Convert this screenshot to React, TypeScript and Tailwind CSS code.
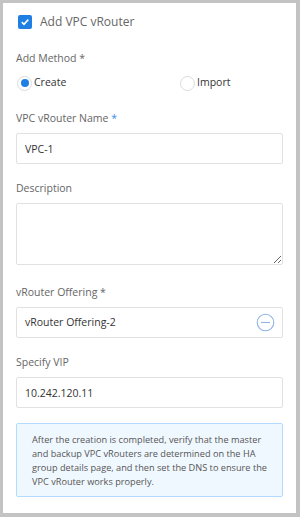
import { useState } from 'react';

function Label({ text, star, starBlue }: { text: string; star?: boolean; starBlue?: boolean }) {
    return (
        <div className="text-[10.5px] leading-4 text-[#666] mb-[7px]">
            {text}
            {star && <span className={starBlue ? 'text-[#3c8ce7]' : ''}> *</span>}
        </div>
    );
}

function Radio({ checked, label, onClick }: { checked: boolean; label: string; onClick: () => void }) {
    return (
        <button type="button" onClick={onClick} className="flex items-center gap-[2px] text-[10.5px] text-[#333]">
            <span className="w-[15px] h-[15px] rounded-full border border-[#dcdcdc] bg-white flex items-center justify-center">
                {checked && <span className="w-[8px] h-[8px] rounded-full bg-[#1f7fe3]" />}
            </span>
            {label}
        </button>
    );
}

export default function App() {
    const [method, setMethod] = useState<'create' | 'import'>('create');
    const [enabled, setEnabled] = useState(true);

    return (
        <div className="w-[300px] h-[517px] bg-[#c3c3c3] pt-[3px] pl-[3px] pr-[4px] pb-[4px]" style={{ fontFamily: '"Open Sans", "Noto Sans", sans-serif' }}>
            <div className="bg-white h-full px-[13px] pt-[11px]">

                {/* checkbox */}
                <button type="button" onClick={() => setEnabled(!enabled)} className="flex items-center gap-[8px] h-[15px] ml-[2px]">
                    <span className={`w-[14px] h-[14px] rounded-[2px] flex items-center justify-center ${enabled ? 'bg-[#1f7fe3]' : 'border border-[#ccc]'}`}>
                        {enabled && (
                            <svg width="10" height="10" viewBox="0 0 10 10">
                                <path d="M1.8 5.2 L4 7.3 L8.3 2.6" fill="none" stroke="white" strokeWidth="1.6" />
                            </svg>
                        )}
                    </span>
                    <span className="text-[12px] text-[#666]">Add VPC vRouter</span>
                </button>

                <div className="mt-[21px]">
                    <Label text="Add Method" star />
                    <div className="flex items-center h-[20px] mt-[1px]">
                        <div className="w-[164px] pl-[1px]">
                            <Radio checked={method === 'create'} label="Create" onClick={() => setMethod('create')} />
                        </div>
                        <Radio checked={method === 'import'} label="Import" onClick={() => setMethod('import')} />
                    </div>
                </div>

                <div className="mt-[17px]">
                    <Label text="VPC vRouter Name" star starBlue />
                    <input
                        className="w-full h-[31px] border border-[#e1e1e1] rounded-[2px] px-[8px] text-[10.5px] text-[#333] outline-none block"
                        defaultValue="VPC-1"
                    />
                </div>

                <div className="mt-[16px]">
                    <Label text="Description" />
                    <textarea className="w-full h-[62px] border border-[#e1e1e1] rounded-[2px] px-[8px] py-[6px] text-[10.5px] outline-none block" />
                </div>

                <div className="mt-[19px]">
                    <Label text="vRouter Offering" star />
                    <div className="w-full h-[31px] border border-[#e1e1e1] rounded-[2px] pl-[8px] pr-[7px] flex items-center justify-between">
                        <span className="text-[10.5px] text-[#333]">vRouter Offering-2</span>
                        <svg width="19" height="19" viewBox="0 0 19 19">
                            <circle cx="9.5" cy="9.5" r="8.3" fill="none" stroke="#8fb5e6" strokeWidth="1.1" />
                            <path d="M5 9.5 H14" stroke="#8fb5e6" strokeWidth="1.1" />
                        </svg>
                    </div>
                </div>

                <div className="mt-[16px]">
                    <Label text="Specify VIP" />
                    <input
                        className="w-full h-[31px] border border-[#e1e1e1] rounded-[2px] px-[8px] text-[10.5px] text-[#333] outline-none block"
                        defaultValue="10.242.120.11"
                    />
                </div>

                <div className="mt-[15px] h-[74px] bg-[#f0f8ff] border border-[#b5daff] rounded-[2px] pl-[15px] pr-[10px] pt-[9px] text-[9.2px] leading-[14px] text-[#555]">
                    After the creation is completed, verify that the master and backup VPC vRouters are determined on the HA group details page, and then set the DNS to ensure the VPC vRouter works properly.
                </div>
            </div>
        </div>
    );
}
